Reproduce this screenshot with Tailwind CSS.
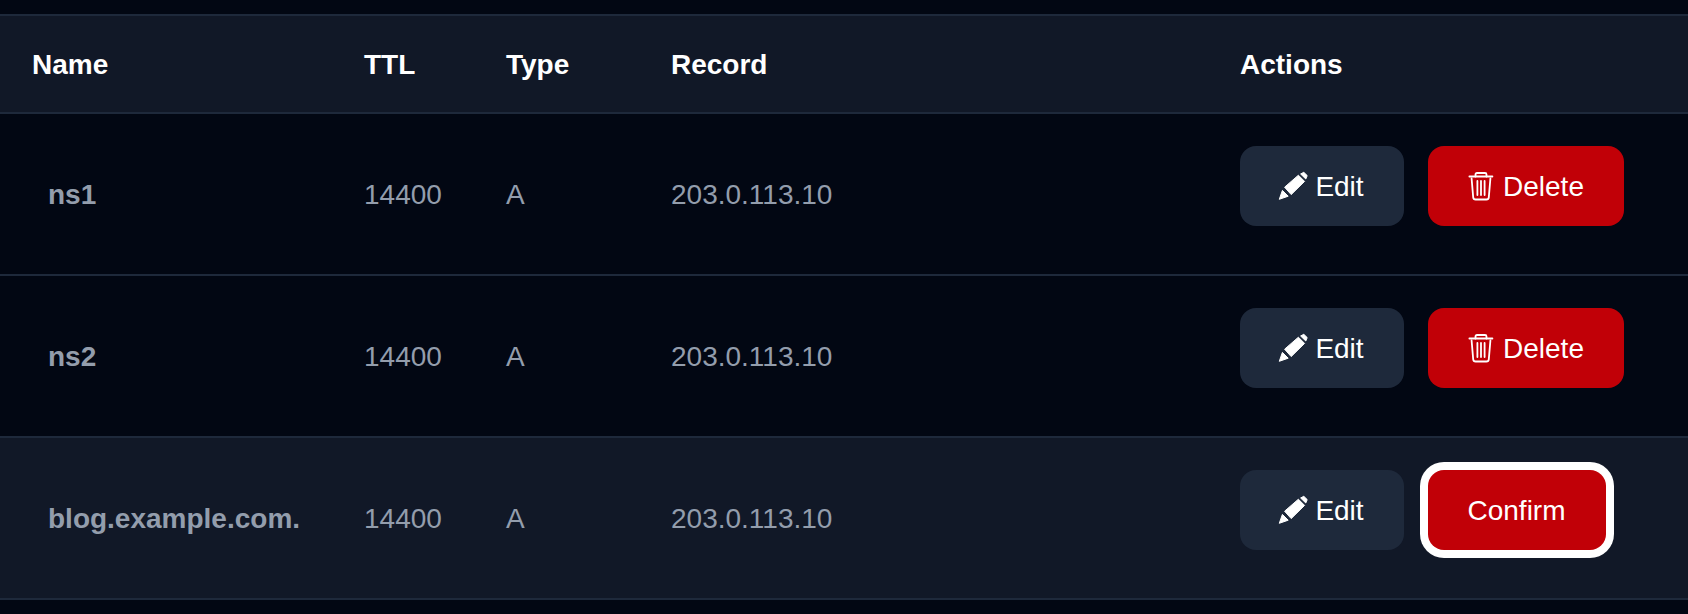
<!DOCTYPE html>
<html><head><script src="https://cdn.jsdelivr.net/npm/@tailwindcss/browser@4"></script></head>
<body class="bg-[#020713] font-['Liberation_Sans',sans-serif]">
<div class="w-[1688px] h-[614px] overflow-hidden pt-[14px] bg-[#020713] text-[28px]">
<div class="flex h-[100px] items-center pt-[2px] bg-[#111827] border-y-2 border-[#1e293b] font-bold text-white">
<div class="w-[364px] pl-[32px]">Name</div><div class="w-[142px]">TTL</div><div class="w-[165px]">Type</div><div class="w-[569px]">Record</div><div>Actions</div>
</div>

<div class="flex h-[162px] items-center pt-[2px] border-b-2 border-[#1e293b] text-[#939dac]">
<div class="w-[364px] pl-[48px] font-bold">ns1</div><div class="w-[142px]">14400</div><div class="w-[165px]">A</div><div class="w-[569px]">203.0.113.10</div>
<div class="flex gap-[24px] -mt-[18px]">
<button class="flex h-[80px] w-[164px] pr-[1px] items-center justify-center gap-[8px] rounded-[16px] bg-[#1e293b] text-white"><svg class="w-[28px] h-[28px] overflow-visible" viewBox="0 0 28 28" fill="currentColor" stroke="currentColor" stroke-width="1" stroke-linejoin="round"><path d="M5.6 15.2 19.4 3.2 25.6 9.4 12.2 22.6z"/><path d="M21.6 2 24.8 0.3 28.2 3.6 26.8 7z"/><path d="M0.3 27.3 3.4 18.4 9.2 24.2z"/></svg><span class="pt-[2px]">Edit</span></button>
<button class="flex h-[80px] w-[196px] pr-[1px] items-center justify-center gap-[8px] rounded-[16px] bg-[#c10007] text-white"><svg class="w-[28px] h-[28px] overflow-visible" viewBox="0 0 28 28" fill="none" stroke="currentColor" stroke-width="1.8" stroke-linecap="round" stroke-linejoin="round"><path d="M2.4 4.5H25.4"/><path d="M8.5 4.5V2.4Q8.5 1 10 1H18Q19.5 1 19.5 2.4V4.5"/><path d="M4.6 6.5 6.2 25.4Q6.4 27.5 8.6 27.5H19.4Q21.6 27.5 21.8 25.4L23.4 6.5"/><path d="M10.4 9V23M14 9V23M17.6 9V23"/></svg><span class="pt-[2px]">Delete</span></button>
</div></div>

<div class="flex h-[162px] items-center pt-[2px] border-b-2 border-[#1e293b] text-[#939dac]">
<div class="w-[364px] pl-[48px] font-bold">ns2</div><div class="w-[142px]">14400</div><div class="w-[165px]">A</div><div class="w-[569px]">203.0.113.10</div>
<div class="flex gap-[24px] -mt-[18px]">
<button class="flex h-[80px] w-[164px] pr-[1px] items-center justify-center gap-[8px] rounded-[16px] bg-[#1e293b] text-white"><svg class="w-[28px] h-[28px] overflow-visible" viewBox="0 0 28 28" fill="currentColor" stroke="currentColor" stroke-width="1" stroke-linejoin="round"><path d="M5.6 15.2 19.4 3.2 25.6 9.4 12.2 22.6z"/><path d="M21.6 2 24.8 0.3 28.2 3.6 26.8 7z"/><path d="M0.3 27.3 3.4 18.4 9.2 24.2z"/></svg><span class="pt-[2px]">Edit</span></button>
<button class="flex h-[80px] w-[196px] pr-[1px] items-center justify-center gap-[8px] rounded-[16px] bg-[#c10007] text-white"><svg class="w-[28px] h-[28px] overflow-visible" viewBox="0 0 28 28" fill="none" stroke="currentColor" stroke-width="1.8" stroke-linecap="round" stroke-linejoin="round"><path d="M2.4 4.5H25.4"/><path d="M8.5 4.5V2.4Q8.5 1 10 1H18Q19.5 1 19.5 2.4V4.5"/><path d="M4.6 6.5 6.2 25.4Q6.4 27.5 8.6 27.5H19.4Q21.6 27.5 21.8 25.4L23.4 6.5"/><path d="M10.4 9V23M14 9V23M17.6 9V23"/></svg><span class="pt-[2px]">Delete</span></button>
</div></div>

<div class="flex h-[162px] items-center pt-[2px] bg-[#111827] border-b-2 border-[#1e293b] text-[#939dac]">
<div class="w-[364px] pl-[48px] font-bold">blog.example.com.</div><div class="w-[142px]">14400</div><div class="w-[165px]">A</div><div class="w-[569px]">203.0.113.10</div>
<div class="flex gap-[24px] -mt-[18px]">
<button class="flex h-[80px] w-[164px] pr-[1px] items-center justify-center gap-[8px] rounded-[16px] bg-[#1e293b] text-white"><svg class="w-[28px] h-[28px] overflow-visible" viewBox="0 0 28 28" fill="currentColor" stroke="currentColor" stroke-width="1" stroke-linejoin="round"><path d="M5.6 15.2 19.4 3.2 25.6 9.4 12.2 22.6z"/><path d="M21.6 2 24.8 0.3 28.2 3.6 26.8 7z"/><path d="M0.3 27.3 3.4 18.4 9.2 24.2z"/></svg><span class="pt-[2px]">Edit</span></button>
<button class="flex h-[80px] w-[178px] pr-[1px] items-center justify-center rounded-[16px] bg-[#c10007] text-white ring-8 ring-white"><span class="pt-[2px]">Confirm</span></button>
</div></div>
</div>
</body></html>
